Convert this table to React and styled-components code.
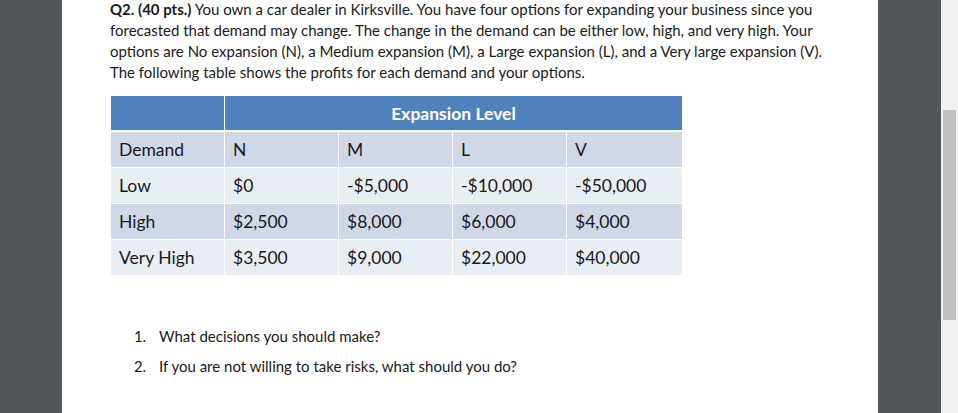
import React from "react";
import styled, { createGlobalStyle } from "styled-components";

const Global = createGlobalStyle`
  html, body { margin: 0; padding: 0; overflow: hidden; }
  body { width: 958px; height: 413px; background: #525659; font-family: Lato, "Open Sans", sans-serif; }
`;

const Viewer = styled.div`
  display: flex;
  width: 958px;
  height: 413px;
`;

const Side = styled.div`
  width: ${p => p.$w}px;
  flex: none;
  background: #525659;
`;

const Page = styled.div`
  width: 816px;
  flex: none;
  background: #ffffff;
  padding: 0 0 0 48px;
  box-sizing: border-box;
  color: #1a1a1a;
`;

const Scrollbar = styled.div`
  width: 17px;
  flex: none;
  background: #f1f1f1;
  padding: 110px 2px 0 2px;
  box-sizing: border-box;
`;

const Thumb = styled.div`
  width: 13px;
  height: 210px;
  background: #c1c1c1;
`;

const Para = styled.p`
  margin: -1px 0 0 0;
  font-size: 15px;
  line-height: 21px;
  width: 740px;
`;

const Strong = styled.strong`
  font-weight: 700;
`;

const Table = styled.table`
  margin-top: 13px;
  margin-left: 1px;
  border-collapse: collapse;
  font-size: 17.5px;
`;

const HeadCell = styled.th`
  background: #4f81bd;
  color: #ffffff;
  font-weight: 700;
  height: 34px;
  padding: 0;
  text-align: center;
  border-right: 1px solid #ffffff;
  border-bottom: 2px solid #ffffff;
`;

const Cell = styled.td`
  width: ${p => (p.$last ? 107 : 105)}px;
  height: 35px;
  padding: 0 0 0 8px;
  background: ${p => (p.$odd ? "#d0d8e8" : "#e9edf4")};
  border-right: 1px solid #ffffff;
  border-bottom: 1px solid #ffffff;
  text-align: left;
  font-weight: 400;
`;

const List = styled.ol`
  margin: 45px 0 0 0;
  padding: 0 0 0 40px;
  font-size: 15px;
  line-height: 30px;
  li { padding-left: 9px; }
`;

const rows = [
  ["Demand", "N", "M", "L", "V"],
  ["Low", "$0", "-$5,000", "-$10,000", "-$50,000"],
  ["High", "$2,500", "$8,000", "$6,000", "$4,000"],
  ["Very High", "$3,500", "$9,000", "$22,000", "$40,000"],
];

export default function App() {
  return (
    <>
      <Global />
      <Viewer>
        <Side $w={62} />
        <Page>
          <Para>
            <Strong>Q2. (40 pts.)</Strong> You own a car dealer in Kirksville. You have four options for expanding your business since you
            forecasted that demand may change. The change in the demand can be either low, high, and very high. Your
            options are No expansion (N), a Medium expansion (M), a Large expansion (L), and a Very large expansion (V).
            The following table shows the profits for each demand and your options.
          </Para>
          <Table>
            <thead>
              <tr>
                <HeadCell style={{ width: 113 }} />
                <HeadCell colSpan={4}>Expansion Level</HeadCell>
              </tr>
            </thead>
            <tbody>
              {rows.map((r, i) => (
                <tr key={i}>
                  {r.map((c, j) => (
                    <Cell key={j} $odd={i % 2 === 0} $last={j === 4}>{c}</Cell>
                  ))}
                </tr>
              ))}
            </tbody>
          </Table>
          <List>
            <li>What decisions you should make?</li>
            <li>If you are not willing to take risks, what should you do?</li>
          </List>
        </Page>
        <Side $w={63} />
        <Scrollbar>
          <Thumb />
        </Scrollbar>
      </Viewer>
    </>
  );
}
